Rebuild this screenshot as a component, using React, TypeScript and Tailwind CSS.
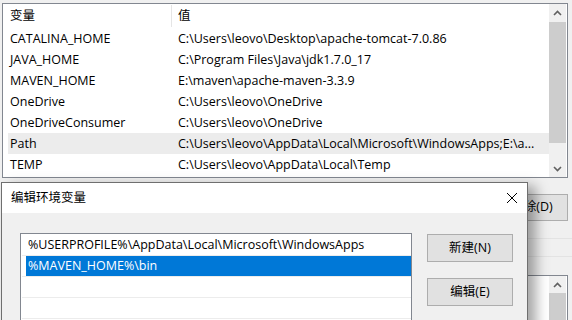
import React from "react";

const font = { fontFamily: '"Open Sans", "Noto Sans CJK SC", sans-serif' };

const rows = [
  ["CATALINA_HOME", "C:\\Users\\leovo\\Desktop\\apache-tomcat-7.0.86"],
  ["JAVA_HOME", "C:\\Program Files\\Java\\jdk1.7.0_17"],
  ["MAVEN_HOME", "E:\\maven\\apache-maven-3.3.9"],
  ["OneDrive", "C:\\Users\\leovo\\OneDrive"],
  ["OneDriveConsumer", "C:\\Users\\leovo\\OneDrive"],
  ["Path", "C:\\Users\\leovo\\AppData\\Local\\Microsoft\\WindowsApps;E:\\a..."],
  ["TEMP", "C:\\Users\\leovo\\AppData\\Local\\Temp"],
];

const Chevron = ({ down = false }: { down?: boolean }) => (
  <svg width="9" height="6" viewBox="0 0 9 6" className={down ? "rotate-180" : ""}>
    <path d="M1 5 L4.5 1.5 L8 5" fill="none" stroke="#606060" strokeWidth="1.6" />
  </svg>
);

const App = () => {
  return (
    <div className="relative w-[572px] h-[320px] overflow-hidden bg-[#f0f0f0] text-[12.5px] text-black" style={font}>
      {/* background window */}
      <div className="pl-[2px] pt-[3px]">
        <div className="flex w-[566px] h-[175px] border border-[#828790] bg-white">
          <div className="flex-1 pl-[5px]">
            <div className="flex h-[24px] items-center">
              <div className="w-[163px] pl-[2px]">变量</div>
              <div className="w-px h-[22px] bg-[#e5e5e5]" />
              <div className="pl-[6px]">值</div>
            </div>
            {rows.map(([k, v]) => (
              <div key={k} className={`flex h-[21px] items-center pt-px ${k === "Path" ? "bg-[#ececec]" : ""}`}>
                <div className="w-[170px] pl-[2px] whitespace-nowrap">{k}</div>
                <div className="whitespace-nowrap">{v}</div>
              </div>
            ))}
          </div>
          <div className="w-[17px] mr-px flex flex-col items-center bg-[#f0f0f0]">
            <div className="h-[17px] flex items-center justify-center"><Chevron /></div>
            <div className="w-[17px] h-[121px] mt-[1px] bg-[#cdcdcd]" />
            <div className="flex-1" />
            <div className="h-[17px] flex items-center justify-center"><Chevron down /></div>
          </div>
        </div>
        <div className="flex justify-end pr-[4px] mt-[16px]">
          <div className="w-[72px] h-[27px] flex items-center justify-center bg-[#e1e1e1] border border-[#adadad]">删除(D)</div>
        </div>
        <div className="mt-[17px] h-px bg-[#e3e3e3]" />
        <div className="mt-[17px] h-px bg-[#e3e3e3]" />
        <div className="flex justify-end pr-[4px] mt-[18px]">
          <div className="w-[200px] h-[60px] flex justify-end border border-[#828790] bg-white">
            <div className="w-[17px] mr-px flex flex-col items-center bg-[#f0f0f0]">
              <div className="h-[17px] flex items-center justify-center"><Chevron /></div>
              <div className="w-[17px] flex-1 bg-[#cdcdcd]" />
            </div>
          </div>
        </div>
      </div>

      {/* edit dialog */}
      <div className="absolute left-[1px] top-[182px] w-[527px] h-[150px] border border-[#6f6f6f] bg-[#f0f0f0] shadow-[8px_4px_12px_rgba(0,0,0,0.35)]">
        <div className="h-[30px] bg-white flex items-center justify-between pl-[9px] pr-[8px]">
          <span>编辑环境变量</span>
          <svg width="12" height="12" viewBox="0 0 12 12" className="mr-[1px]">
            <path d="M1 1 L11 11 M11 1 L1 11" stroke="#000" strokeWidth="1" />
          </svg>
        </div>
        <div className="flex pl-[18px] pt-[20px]">
          <div className="w-[392px] h-[100px] border border-[#828790] bg-white pt-[1px] pl-px">
            <div className="h-[21px] border-b border-[#ececec] flex items-center pl-[6px] whitespace-nowrap">
              %USERPROFILE%\AppData\Local\Microsoft\WindowsApps
            </div>
            <div className="h-[21px] border-b border-[#ececec] pl-[4px]">
              <div className="h-[20px] bg-[#0078d7] text-white flex items-center pl-[2px]">%MAVEN_HOME%\bin</div>
            </div>
            <div className="h-[21px] border-b border-[#ececec]" />
            <div className="h-[21px] border-b border-[#ececec]" />
          </div>
          <div className="ml-[15px] flex flex-col gap-[16px] pt-[1px]">
            <div className="w-[86px] h-[28px] flex items-center justify-center bg-[#e1e1e1] border border-[#adadad]">新建(N)</div>
            <div className="w-[86px] h-[28px] flex items-center justify-center bg-[#e1e1e1] border border-[#adadad]">编辑(E)</div>
          </div>
        </div>
      </div>
    </div>
  );
};

export default App;
